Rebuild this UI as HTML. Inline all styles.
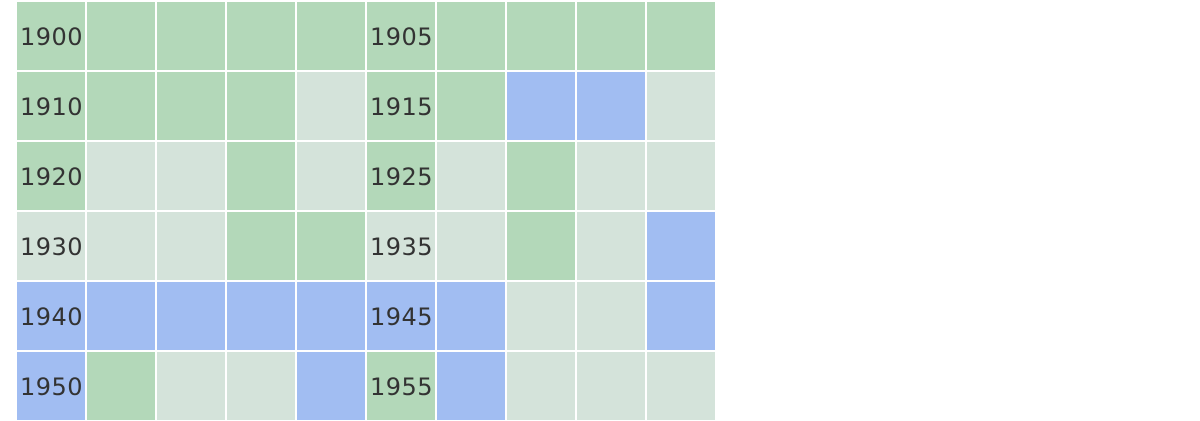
<!DOCTYPE html>
<html><head><style>
body{margin:0;width:1200px;height:400px;background:#fff;overflow:hidden;position:relative;font-family:"DejaVu Sans","Liberation Sans",sans-serif}
.c{position:absolute;width:68px;height:68px;color:#333;font-size:24px;line-height:68px;padding-left:3px;box-sizing:border-box;letter-spacing:0.5px;padding-top:1px}
.G{background:#b3d8b9}.L{background:#d4e3da}.B{background:#a1bdf2}
</style></head><body>
<div id="g"></div>
<script>
var R=["GGGGGGGGGG","GGGGLGGBBL","GLLGLGLGLL","LLLGGLLGLB","BBBBBBBLLB","BGLLBGBLLL"];
var h="";
for(var r=0;r<6;r++)for(var c=0;c<10;c++){
var t=(c==0||c==5)?(1900+r*10+(c==5?5:0)):"";
h+='<div class="c '+R[r][c]+'" style="left:'+(17+c*70)+'px;top:'+(2+r*70)+'px">'+t+'</div>';}
document.getElementById("g").innerHTML=h;
</script>
</body></html>
